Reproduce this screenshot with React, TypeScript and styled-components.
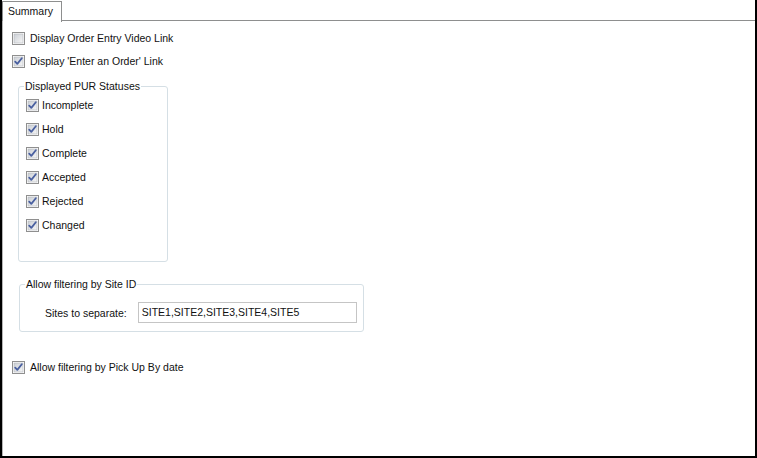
import React from "react";
import styled, { createGlobalStyle } from "styled-components";

const Global = createGlobalStyle`
  html, body { margin: 0; padding: 0; background: #ffffff; }
  body { font-family: "Liberation Sans", Arial, sans-serif; font-size: 10.5px; color: #000; }
  * { box-sizing: border-box; }
`;

const Frame = styled.div`
  width: 757px;
  height: 458px;
  display: flex;
  flex-direction: column;
  border-left: 2px solid #000;
  border-right: 2px solid #000;
  border-bottom: 2px solid #000;
  background: #fff;
`;

const TabStrip = styled.div`
  display: flex;
  height: 21px;
  padding-top: 1px;
`;

const Tab = styled.div`
  width: 60px;
  height: 21px;
  border: 1px solid #8e8f8f;
  border-bottom: none;
  background: #fff;
  padding: 3px 0 0 5px;
  font-size: 10.5px;
  color: #111;
`;

const TabFill = styled.div`
  flex: 1;
  border-bottom: 1px solid #8e8f8f;
`;

const Panel = styled.div`
  flex: 1;
  border-left: 1px solid #b5b5b5;
  display: flex;
  flex-direction: column;
  padding: 11px 0 0 9px;
`;

const CheckRow = styled.label<{ $h: number; $gap: number }>`
  display: flex;
  align-items: center;
  height: ${(p) => p.$h}px;
  gap: ${(p) => p.$gap}px;
`;

const BoxWrap = styled.span`
  width: 13px;
  height: 13px;
  display: inline-block;
  flex: none;
`;

const Label = styled.span`
  white-space: nowrap;
  line-height: 13px;
  color: #111;
`;

function CheckBox({ checked }: { checked: boolean }) {
  return (
    <BoxWrap>
      <svg width="13" height="13" viewBox="0 0 13 13">
        <defs>
          <linearGradient id="cbg" x1="0" y1="0" x2="1" y2="1">
            <stop offset="0" stopColor="#cbcfd5" />
            <stop offset="1" stopColor="#f6f6f6" />
          </linearGradient>
        </defs>
        <rect x="0.5" y="0.5" width="12" height="12" fill="#fff" stroke="#8f8f8f" />
        <rect x="2" y="2" width="9" height="9" fill="url(#cbg)" stroke="#b3b6bb" strokeWidth="0.6" />
        {checked && (
          <path
            d="M3.2 6.6 L5.3 8.9 L9.8 3.2"
            fill="none"
            stroke="#4a60a0"
            strokeWidth="1.8"
            strokeLinecap="round"
            strokeLinejoin="round"
          />
        )}
      </svg>
    </BoxWrap>
  );
}

const Check = ({
  checked,
  text,
  h = 24,
  gap = 5,
}: {
  checked: boolean;
  text: string;
  h?: number;
  gap?: number;
}) => (
  <CheckRow $h={h} $gap={gap}>
    <CheckBox checked={checked} />
    <Label>{text}</Label>
  </CheckRow>
);

const Spacer = styled.div<{ $h: number }>`
  height: ${(p) => p.$h}px;
  flex: none;
`;

const Group = styled.fieldset<{ $w: number; $h: number; $ml: number; $mt: number }>`
  width: ${(p) => p.$w}px;
  height: ${(p) => p.$h}px;
  margin: ${(p) => p.$mt}px 0 0 ${(p) => p.$ml}px;
  border: 1px solid #d5dfe5;
  border-radius: 3px;
  padding: 0;
  min-width: 0;
`;

const Legend = styled.legend`
  padding: 0 1px;
  margin-left: 5px;
  font-size: 10.5px;
  color: #111;
`;

const StatusList = styled.div`
  display: flex;
  flex-direction: column;
  padding: 1px 0 0 7px;
`;

const SiteRow = styled.div`
  display: flex;
  align-items: center;
  padding: 12px 0 0 25px;
  gap: 11px;
`;

const SiteLabel = styled.span`
  white-space: nowrap;
  color: #111;
`;

const SiteInput = styled.div`
  width: 219px;
  height: 21px;
  border: 1px solid #c5c5c5;
  padding: 3px 0 0 3px;
  white-space: nowrap;
  color: #111;
`;

export default function App() {
  const statuses = ["Incomplete", "Hold", "Complete", "Accepted", "Rejected", "Changed"];
  return (
    <>
      <Global />
      <Frame>
        <TabStrip>
          <Tab>Summary</Tab>
          <TabFill />
        </TabStrip>
        <Panel>
          <Check checked={false} text="Display Order Entry Video Link" h={13} />
          <Spacer $h={10} />
          <Check checked={true} text="Display 'Enter an Order' Link" h={13} />
          <Group $w={150} $h={182} $ml={6} $mt={12}>
            <Legend>Displayed PUR Statuses</Legend>
            <StatusList>
              {statuses.map((s) => (
                <Check key={s} checked={true} text={s} gap={3} />
              ))}
            </StatusList>
          </Group>
          <Group $w={345} $h={54} $ml={7} $mt={16}>
            <Legend>Allow filtering by Site ID</Legend>
            <SiteRow>
              <SiteLabel>Sites to separate:</SiteLabel>
              <SiteInput>SITE1,SITE2,SITE3,SITE4,SITE5</SiteInput>
            </SiteRow>
          </Group>
          <Spacer $h={29} />
          <Check checked={true} text="Allow filtering by Pick Up By date" h={13} />
        </Panel>
      </Frame>
    </>
  );
}
